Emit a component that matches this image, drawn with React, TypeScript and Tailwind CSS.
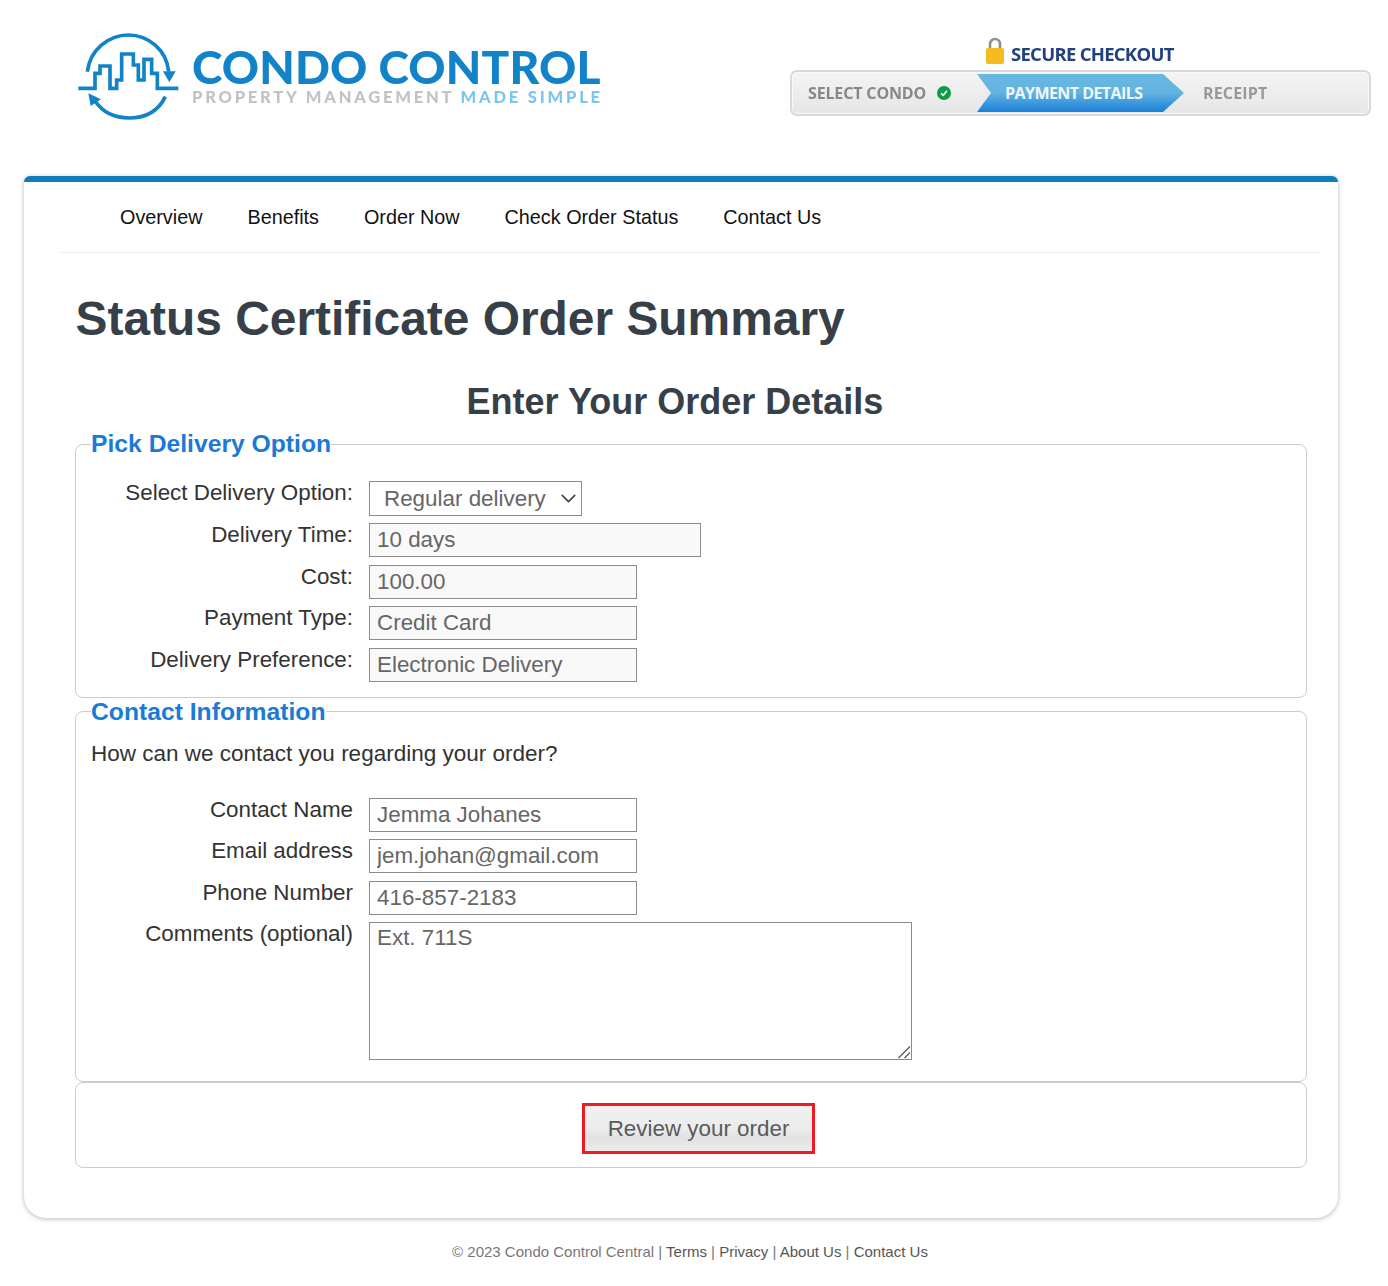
import React from 'react';
import { ChevronDown } from 'lucide-react';

const navItems = ['Overview', 'Benefits', 'Order Now', 'Check Order Status', 'Contact Us'];

const inputClass = 'block h-[34px] border border-[#8c8c8c] px-[7px] text-[22.4px] leading-[30px] text-[#666] outline-none';

function Row({ label, children, className }: { label: string; children: React.ReactNode; className?: string }) {
  return (
    <div className={`flex items-start ${className ?? 'mb-[7.67px]'}`}>
      <label className="w-[278px] shrink-0 pr-[16px] text-right text-[22.4px] leading-[24px] text-[#333]">{label}</label>
      {children}
    </div>
  );
}

function Logo() {
  return (
    <div className="flex items-start blur-[0.35px]">
      <svg width="120" height="100" viewBox="0 0 360 300" fill="none" className="shrink-0">
        <path d="M25 175H75V130H90V108H120V175H140V150H155V72H190V105H205V150H222V88H245V130H262V175H325" stroke="#1283c9" strokeWidth="11" />
        <path d="M52 125C60 60 115 15 175 15C235 15 290 60 296 125" stroke="#1283c9" strokeWidth="11" />
        <path d="M279 124H317L298 157Z" fill="#1283c9" />
        <path d="M286 200C262 250 218 264 178 264C130 264 96 244 76 214" stroke="#1283c9" strokeWidth="11" />
        <path d="M55 190L93 208L62 228Z" fill="#1283c9" />
      </svg>
      <div className="ml-[2px] mt-[15px] font-['Lato',sans-serif] font-black whitespace-nowrap">
        <div className="text-[46px] leading-[44px] tracking-[0.15px] text-[#1283c9]">CONDO CONTROL</div>
        <div className="text-[16.5px] leading-[16px] tracking-[2.8px] text-[#c2c2c2]">
          PROPERTY MANAGEMENT <span className="text-[#7cc6ee]">MADE SIMPLE</span>
        </div>
      </div>
    </div>
  );
}

function Checkout() {
  return (
    <div className="mt-[37px] w-[581px] font-['Open_Sans',sans-serif] font-bold blur-[0.3px]">
      <div className="flex h-[33px] items-start pl-[195px]">
        <svg width="20" height="28" viewBox="0 0 20 28" className="shrink-0">
          <path d="M5 13V7a5 5 0 0 1 10 0v6" fill="none" stroke="#8f8f8f" strokeWidth="2.6" />
          <rect x="1" y="11" width="18" height="16" rx="2" fill="#f6b91f" />
        </svg>
        <span className="ml-[6px] mt-[4px] text-[18.5px] leading-[26px] tracking-[-0.72px] text-[#23417f]">SECURE CHECKOUT</span>
      </div>
      <div className="flex h-[46px] items-center rounded-[7px] border-2 border-[#d9d9d9] bg-gradient-to-b from-[#f4f4f4] to-[#e6e6e6] text-[16px] shadow-[inset_0_0_0_1px_#f8f8f8]">
        <div className="flex w-[185px] items-center pl-[16px] tracking-[-0.15px] text-[#888]">
          SELECT CONDO
          <svg width="14" height="14" viewBox="0 0 14 14" className="ml-[11px]">
            <circle cx="7" cy="7" r="7" fill="#0f9a46" />
            <path d="M4 7.4L6.2 9.4L10 4.8" fill="none" stroke="#fff" strokeWidth="1.6" />
          </svg>
        </div>
        <div className="flex h-[38px] w-[207px] items-center bg-[linear-gradient(#69b8e2_0%,#62b3e0_50%,#1b7fd9_100%)] pl-[28px] tracking-[-0.55px] text-[#f0f7fc] [clip-path:polygon(0_0,186px_0,100%_50%,186px_100%,0_100%,14px_50%)]">
          PAYMENT DETAILS
        </div>
        <div className="pl-[19px] tracking-[0.15px] text-[#999]">RECEIPT</div>
      </div>
    </div>
  );
}

export default function App() {
  return (
    <div className="min-h-[1286px] bg-white font-['Liberation_Sans',Arial,sans-serif]">
      <header className="flex h-[176px] items-start justify-between pl-[70px] pr-[17px] pt-[30px]">
        <Logo />
        <div className="-mt-[30px]">
          <Checkout />
        </div>
      </header>

      <main className="ml-[24px] w-[1314px] rounded-b-[22px] rounded-t-[6px] border-t-[6px] border-[#0e7cbd] bg-white pb-[50px] pl-[36px] pr-[18px] shadow-[0_1px_5px_rgba(0,0,0,0.28)]">
        <nav className="flex h-[71px] items-center gap-[45px] border-b border-[#eeeeee] pl-[60px] pt-[2px] text-[19.8px] text-[#111]">
          {navItems.map((item) => (
            <a key={item} href="#" className="whitespace-nowrap">{item}</a>
          ))}
        </nav>

        <h1 className="ml-[15.5px] mt-[37px] text-[47.9px] font-bold leading-[58px] text-[#373f49]">Status Certificate Order Summary</h1>
        <h2 className="mt-[33px] pr-[30px] text-center text-[36px] font-bold leading-[42px] text-[#373f49]">Enter Your Order Details</h2>

        <fieldset className="ml-[15px] mr-[13px] mt-[7px] rounded-[8px] border border-[#cccccc] pb-[15px] pl-[15px]">
          <legend className="text-[24.7px] font-bold leading-[28px] text-[#1a7ad6]">Pick Delivery Option</legend>
          <div className="pt-[23px]">
            <Row label="Select Delivery Option:" className="mb-[7px]">
              <div className="relative">
                <select defaultValue="Regular delivery" className="block h-[35px] w-[213px] appearance-none border border-[#8c8c8c] pl-[14px] text-[22.4px] text-[#666] outline-none">
                  <option>Regular delivery</option>
                </select>
                <ChevronDown size={25} strokeWidth={1.6} className="pointer-events-none absolute right-[1px] top-[5px] text-[#444]" />
              </div>
            </Row>
            <Row label="Delivery Time:">
              <input readOnly value="10 days" className={`${inputClass} w-[332px] bg-[#f9f9f9]`} />
            </Row>
            <Row label="Cost:">
              <input readOnly value="100.00" className={`${inputClass} w-[268px] bg-[#f9f9f9]`} />
            </Row>
            <Row label="Payment Type:">
              <input readOnly value="Credit Card" className={`${inputClass} w-[268px] bg-[#f9f9f9]`} />
            </Row>
            <Row label="Delivery Preference:" className="">
              <input readOnly value="Electronic Delivery" className={`${inputClass} w-[268px] bg-[#f9f9f9]`} />
            </Row>
          </div>
        </fieldset>

        <fieldset className="ml-[15px] mr-[13px] rounded-[8px] border border-[#cccccc] pb-[21px] pl-[15px]">
          <legend className="text-[24.7px] font-bold leading-[28px] text-[#1a7ad6]">Contact Information</legend>
          <p className="mt-[15px] text-[22.5px] leading-[26px] text-[#333]">How can we contact you regarding your order?</p>
          <div className="pt-[30.6px]">
            <Row label="Contact Name">
              <input readOnly value="Jemma Johanes" className={`${inputClass} w-[268px] bg-white`} />
            </Row>
            <Row label="Email address">
              <input readOnly value="jem.johan@gmail.com" className={`${inputClass} w-[268px] bg-white`} />
            </Row>
            <Row label="Phone Number" className="mb-[7px]">
              <input readOnly value="416-857-2183" className={`${inputClass} w-[268px] bg-white`} />
            </Row>
            <Row label="Comments (optional)" className="">
              <div className="relative">
                <textarea readOnly value="Ext. 711S" className="block h-[138px] w-[543px] resize-none border border-[#8c8c8c] px-[7px] text-[22.4px] leading-[30px] text-[#666] outline-none" />
                <svg width="14" height="14" viewBox="0 0 14 14" className="pointer-events-none absolute bottom-[1px] right-[1px]">
                  <path d="M1.5 13L13 1.5M7.5 13L13 7.5" stroke="#555" strokeWidth="1.2" />
                </svg>
              </div>
            </Row>
          </div>
        </fieldset>

        <div className="ml-[15px] mr-[13px] flex h-[86px] items-start justify-center rounded-[8px] border border-[#cccccc] pl-[15px] pt-[20px]">
          <button className="h-[51px] w-[233px] border-[3px] border-[#ed1c24] bg-[linear-gradient(#f0f0f0_0%,#ececec_50%,#e2e2e2_70%,#ebebeb_100%)] text-[22.4px] text-[#5a5a5a]">
            Review your order
          </button>
        </div>
      </main>

      <footer className="mt-[24px] w-[1380px] text-center text-[15px] leading-[20px] text-[#777]">
        © 2023 Condo Control Central | <a href="#" className="text-[#555]">Terms</a> | <a href="#" className="text-[#555]">Privacy</a> | <a href="#" className="text-[#555]">About Us</a> | <a href="#" className="text-[#555]">Contact Us</a>
      </footer>
    </div>
  );
}
